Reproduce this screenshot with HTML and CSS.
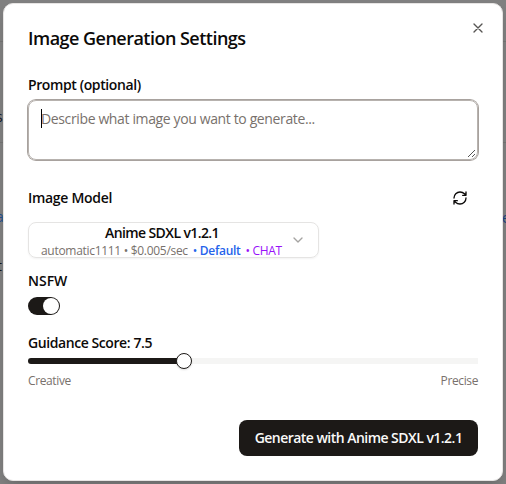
FILE: index.html
```
<!DOCTYPE html>
<html lang="en">
<head>
<meta charset="utf-8">
<title>Image Generation Settings</title>
<link rel="stylesheet" href="styles.css">
</head>
<body>
<div class="page-line line-top"></div>
<div class="page-line line-bottom"></div>
<span class="page-text text-s">s</span>
<span class="page-text text-a">a</span>
<span class="page-text text-t">t</span>
<span class="page-text text-e">e</span>
<main class="dialog">
  <button class="close" aria-label="Close"><svg width="16" height="16" viewBox="0 0 24 24"><path d="M18 6 6 18M6 6l12 12"/></svg></button>
  <h1 class="title"><span>Image Generation Settings</span></h1>
  <label class="label prompt-label"><span>Prompt (optional)</span></label>
  <div class="textarea">
    <span class="caret"></span><span class="placeholder">Describe what image you want to generate...</span>
    <svg class="grip" width="9" height="9" viewBox="0 0 9 9"><path d="M1 8 8 1M5 8l3-3"/></svg>
  </div>
  <div class="model-row">
    <span class="label model-label">Image Model</span>
    <svg class="refresh" width="16" height="16" viewBox="0 0 24 24"><path d="M3 12a9 9 0 0 1 9-9 9.75 9.75 0 0 1 6.74 2.74L21 8M21 3v5h-5M21 12a9 9 0 0 1-9 9 9.75 9.75 0 0 1-6.74-2.74L3 16M8 16H3v5"/></svg>
  </div>
  <div class="select">
    <div class="option">
      <span class="option-name">Anime SDXL v1.2.1</span>
      <span class="option-meta"><span class="m1">automatic1111 • $0.005/sec</span><span class="m2">• <b>Default</b></span><span class="m3">• CHAT</span></span>
    </div>
    <svg class="chevron" width="16" height="16" viewBox="0 0 24 24"><path d="m6 9 6 6 6-6"/></svg>
  </div>
  <label class="label nsfw-label"><span>NSFW</span></label>
  <div class="switch"><span class="knob"></span></div>
  <label class="label score-label"><span>Guidance Score: 7.5</span></label>
  <div class="slider"><div class="range"></div><div class="thumb"></div></div>
  <div class="ends"><span class="creative">Creative</span><span class="precise">Precise</span></div>
  <div class="footer"><button class="generate"><span>Generate with Anime SDXL v1.2.1</span></button></div>
</main>
</body>
</html>
```
FILE: styles.css
```
* { box-sizing: border-box; }
body { margin: 0; width: 506px; height: 484px; padding: 3px; overflow: hidden; background: #808080; font-family: "Open Sans", "Noto Sans", sans-serif; color: #0c0a09; position: relative; }
svg { fill: none; stroke: currentColor; stroke-width: 2; stroke-linecap: round; stroke-linejoin: round; display: block; }
button { font: inherit; border: 0; padding: 0; }
.page-line { position: absolute; left: 0; width: 506px; height: 1px; background: #747473; }
.line-top { top: 41px; }
.line-bottom { top: 142px; }
.page-text { position: absolute; font-size: 14px; line-height: 20px; }
.text-s { left: -4px; top: 107px; color: #10182c; }
.text-a { left: -4px; top: 207px; color: #24508f; }
.text-t { left: -3px; top: 256px; color: #171717; }
.text-e { left: 502px; top: 208px; color: #1c3f80; }
.dialog { position: relative; display: flex; flex-direction: column; width: 500px; height: 478px; padding: 24px; border: 1px solid #e7e5e4; border-radius: 10px; background: #fff; box-shadow: 0 8px 14px -4px #0003; }
.close { position: absolute; right: 16px; top: 16px; background: none; color: #575553; }
.title { margin: 0; height: 20px; font-size: 18px; line-height: 20px; font-weight: 600; white-space: nowrap; letter-spacing: -0.52px; }
.label { font-size: 14px; line-height: 20px; height: 20px; font-weight: 600; white-space: nowrap; }
.prompt-label { margin-top: 27px; letter-spacing: -0.4px; }
.textarea { display: flex; position: relative; margin-top: 5px; height: 60px; padding: 8px 12px; border: 1px solid #b7b2ae; border-radius: 8px; box-shadow: 0 0 0 1px #a8a29e; font-size: 14px; line-height: 20px; color: #78716c; white-space: nowrap; }
.caret { width: 1px; height: 19px; margin-right: -1px; background: #000; }
.placeholder { letter-spacing: -0.37px; }
.grip { position: absolute; right: 1px; bottom: 1px; stroke-width: 1; stroke: #555; stroke-linecap: butt; }
.model-row { display: flex; justify-content: space-between; align-items: center; height: 36px; margin-top: 20px; padding-right: 10px; }
.model-label { letter-spacing: -0.3px; }
.select { display: flex; align-items: center; justify-content: space-between; width: 291px; height: 36px; margin-top: 6px; padding: 0 12px; border: 1px solid #e5e4e3; border-radius: 8px; box-shadow: 0 1px 2px #0000000d; }
.option { display: flex; flex-direction: column; align-items: center; width: 242px; padding-top: 1px; white-space: nowrap; }
.option-name { font-size: 14px; line-height: 20px; font-weight: 600; letter-spacing: -0.6px; }
.option-meta { display: flex; gap: 5px; width: 242px; font-size: 12px; line-height: 16px; color: #78716c; letter-spacing: -0.3px; }
.m2 { color: #2563eb; }
.m2 b { font-weight: 600; }
.m3 { color: #9810fa; }
.chevron { color: #a5a3a1; }
.nsfw-label { margin-top: 13px; }
.switch { width: 32px; height: 18px; margin-top: 6px; padding: 1px; border-radius: 9px; background: #1c1917; display: flex; justify-content: flex-end; }
.knob { width: 16px; height: 16px; border-radius: 50%; background: #fff; }
.score-label { margin-top: 18px; letter-spacing: -0.42px; }
.slider { display: flex; align-items: center; height: 16px; background: linear-gradient(#f5f5f4, #f5f5f4) center / 100% 6px no-repeat; }
.range { width: 156px; height: 6px; border-radius: 3px 0 0 3px; background: #1c1917; }
.thumb { width: 16px; height: 16px; margin-left: -8px; border: 1px solid #1c1917; border-radius: 50%; background: #fff; box-shadow: 0 1px 2px #0002; }
.ends { display: flex; justify-content: space-between; margin-top: 4px; font-size: 12px; line-height: 16px; color: #78716c; letter-spacing: -0.38px; }
.footer { display: flex; justify-content: flex-end; margin-top: 31px; }
.generate { width: 239px; height: 36px; border-radius: 8px; background: #1c1917; color: #fafaf9; font-size: 14px; line-height: 20px; font-weight: 600; white-space: nowrap; letter-spacing: -0.53px; }
```
